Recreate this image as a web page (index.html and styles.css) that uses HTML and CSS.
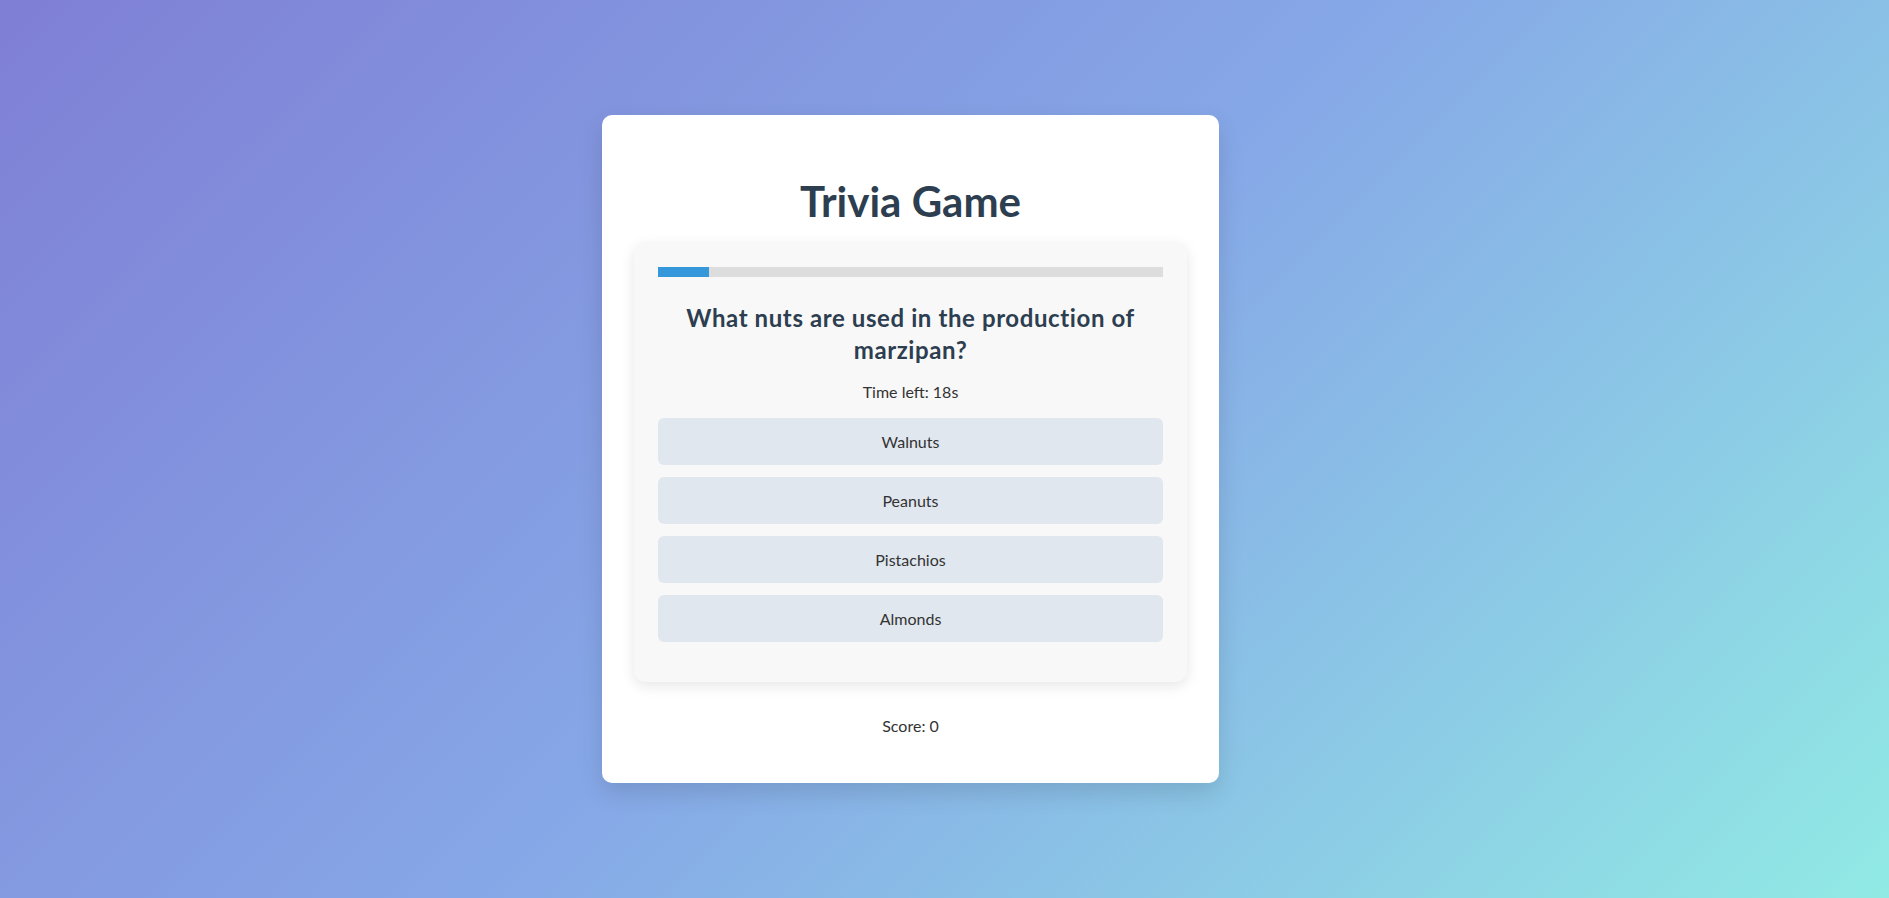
FILE: index.html
```html
<!DOCTYPE html>
<html lang="en">
<head>
<meta charset="utf-8">
<title>Trivia Game</title>
<link rel="stylesheet" href="styles.css">
</head>
<body>
  <main class="card">
    <h1 class="title">Trivia Game</h1>
    <section class="quiz">
      <div class="progress"><div class="progress-fill" style="width: 10%"></div></div>
      <h2 class="question">What nuts are used in the production of marzipan?</h2>
      <p class="timer">Time left: 18s</p>
      <div class="options">
        <button class="option">Walnuts</button>
        <button class="option">Peanuts</button>
        <button class="option">Pistachios</button>
        <button class="option">Almonds</button>
      </div>
    </section>
    <p class="score">Score: 0</p>
  </main>
</body>
</html>
```

FILE: styles.css
```css
html, body {
  height: 100%;
}

body {
  margin: 0;
  padding-right: 68px;
  box-sizing: border-box;
  display: flex;
  align-items: center;
  justify-content: center;
  background: linear-gradient(135deg, #7f7fd5 0%, #86a8e7 50%, #91eae4 100%);
  font-family: "Lato", "Open Sans", "Liberation Sans", sans-serif;
  color: #333;
}

.card {
  width: 553px;
  padding: 32px;
  background: #fff;
  border-radius: 10px;
  box-shadow: 0 10px 25px rgba(0, 0, 0, 0.12);
  text-align: center;
}

.title {
  margin: 29px 0 16px;
  font-size: 42px;
  line-height: 50px;
  font-weight: 700;
  color: #2c3e50;
}

.quiz {
  padding: 25px 24px 24px;
  background: #f8f8f8;
  border-radius: 12px;
  box-shadow: 0 4px 14px rgba(0, 0, 0, 0.1);
}

.progress {
  height: 10px;
  background: #ddd;
}

.progress-fill {
  height: 100%;
  background: #3498db;
}

.question {
  margin: 25px 0 16px;
  font-size: 24px;
  line-height: 32px;
  font-weight: 700;
  letter-spacing: 0.6px;
  color: #2c3e50;
}

.timer {
  margin: 0 0 16px;
  font-size: 16px;
  line-height: 20px;
  color: #333;
}

.options {
  display: flex;
  flex-direction: column;
  gap: 12.3px;
  margin-bottom: 16px;
}

.option {
  height: 47px;
  border: none;
  border-radius: 6px;
  background: #e1e7ef;
  font-family: inherit;
  font-size: 16px;
  color: #333;
  cursor: pointer;
}

.score {
  margin: 34px 0 15px;
  font-size: 16px;
  line-height: 20px;
  color: #333;
}
```
